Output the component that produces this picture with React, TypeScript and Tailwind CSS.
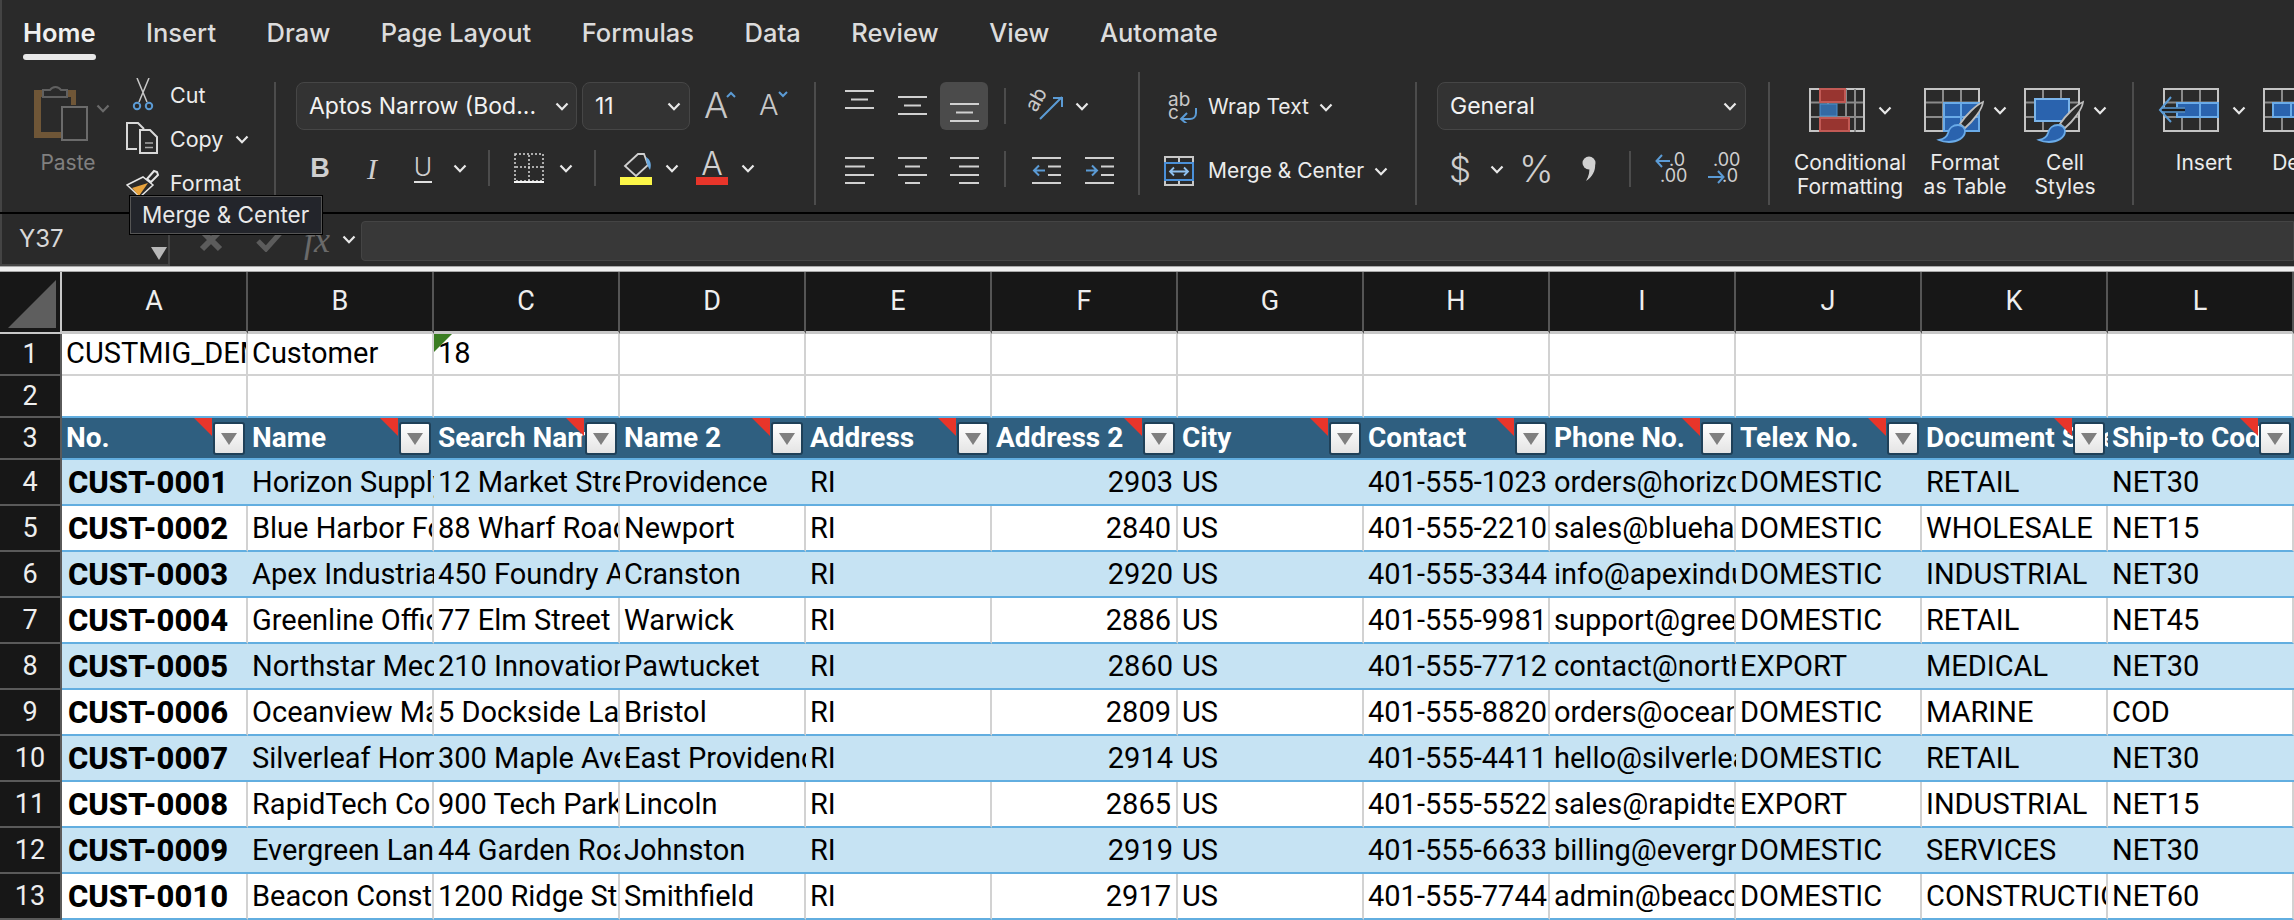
import type { ReactNode } from 'react'

const COLS = ['A', 'B', 'C', 'D', 'E', 'F', 'G', 'H', 'I', 'J', 'K', 'L']
const HEADS = ['No.', 'Name', 'Search Name', 'Name 2', 'Address', 'Address 2', 'City', 'Contact', 'Phone No.', 'Telex No.', 'Document Sales', 'Ship-to Code']

const ROWS = [
  ['CUST-0001', 'Horizon Supply Co', '12 Market Street', 'Providence', 'RI', '2903', 'US', '401-555-1023', 'orders@horizon.com', 'DOMESTIC', 'RETAIL', 'NET30'],
  ['CUST-0002', 'Blue Harbor Foods', '88 Wharf Road', 'Newport', 'RI', '2840', 'US', '401-555-2210', 'sales@blueharbor.com', 'DOMESTIC', 'WHOLESALE', 'NET15'],
  ['CUST-0003', 'Apex Industrial', '450 Foundry Ave', 'Cranston', 'RI', '2920', 'US', '401-555-3344', 'info@apexindustrial.com', 'DOMESTIC', 'INDUSTRIAL', 'NET30'],
  ['CUST-0004', 'Greenline Office', '77 Elm Street', 'Warwick', 'RI', '2886', 'US', '401-555-9981', 'support@greenline.com', 'DOMESTIC', 'RETAIL', 'NET45'],
  ['CUST-0005', 'Northstar Medical', '210 Innovation Way', 'Pawtucket', 'RI', '2860', 'US', '401-555-7712', 'contact@northstar.com', 'EXPORT', 'MEDICAL', 'NET30'],
  ['CUST-0006', 'Oceanview Marine', '5 Dockside Lane', 'Bristol', 'RI', '2809', 'US', '401-555-8820', 'orders@oceanview.com', 'DOMESTIC', 'MARINE', 'COD'],
  ['CUST-0007', 'Silverleaf Home', '300 Maple Ave', 'East Providence', 'RI', '2914', 'US', '401-555-4411', 'hello@silverleaf.com', 'DOMESTIC', 'RETAIL', 'NET30'],
  ['CUST-0008', 'RapidTech Corp', '900 Tech Park', 'Lincoln', 'RI', '2865', 'US', '401-555-5522', 'sales@rapidtech.com', 'EXPORT', 'INDUSTRIAL', 'NET15'],
  ['CUST-0009', 'Evergreen Landscaping', '44 Garden Road', 'Johnston', 'RI', '2919', 'US', '401-555-6633', 'billing@evergreen.com', 'DOMESTIC', 'SERVICES', 'NET30'],
  ['CUST-0010', 'Beacon Construction', '1200 Ridge Street', 'Smithfield', 'RI', '2917', 'US', '401-555-7744', 'admin@beacon.com', 'DOMESTIC', 'CONSTRUCTION', 'NET60'],
]

const TABS = ['Home', 'Insert', 'Draw', 'Page Layout', 'Formulas', 'Data', 'Review', 'View', 'Automate']

function Chev({ className = '', dim = false }: { className?: string; dim?: boolean }) {
  return (
    <svg width="14" height="9" viewBox="0 0 14 9" className={'shrink-0 ' + className}>
      <path d="M1.5 1.5 7 7.2l5.5-5.7" fill="none" stroke={dim ? '#6a6a6a' : '#e8e8e8'} strokeWidth="2.2" />
    </svg>
  )
}

function VLine({ className = '' }: { className?: string }) {
  return <div className={'w-[2px] h-9 bg-[#4c4c4c] shrink-0 ' + className} />
}

function GroupLine({ className = '' }: { className?: string }) {
  return <div className={'w-[2px] h-[123px] bg-[#4c4c4c] shrink-0 ' + className} />
}

function Lines({ lines, h, blue }: { lines: [number, number, number][]; h: number; blue?: ReactNode }) {
  return (
    <svg width="29" height={h} viewBox={`0 0 29 ${h}`} className="shrink-0">
      {lines.map(([a, b, y], i) => (
        <path key={i} d={`M${a} ${y}H${b}`} stroke="#d0d0d0" strokeWidth="2" />
      ))}
      {blue}
    </svg>
  )
}

const TOP3: [number, number, number][] = [[0, 29, 1], [6, 23, 9.5], [0, 29, 18]]
const L4: [number, number, number][] = [[0, 29, 1], [0, 20, 9.5], [0, 29, 18], [0, 20, 26]]
const C4: [number, number, number][] = [[0, 29, 1], [7, 22, 9.5], [0, 29, 18], [7, 22, 26]]
const R4: [number, number, number][] = [[0, 29, 1], [9, 29, 9.5], [0, 29, 18], [9, 29, 26]]
const IND: [number, number, number][] = [[0, 29, 1], [16, 29, 9.5], [16, 29, 18], [0, 29, 26]]

function Paste() {
  return (
    <svg width="56" height="60" viewBox="34 82 56 60" className="shrink-0">
      <path d="M34 90h9v7h-2v35h20v6H34zM67 90h9v15h-5v-8h-4z" fill="#6f5637" />
      <path d="M43 97v-7h7a6.500 6.500 0 0 1 11 0h6v7z" fill="#2a2a2a" stroke="#606060" strokeWidth="2" />
      <rect x="62" y="107" width="25" height="33" fill="none" stroke="#6b6b6b" strokeWidth="2" />
    </svg>
  )
}

function Scissors() {
  return (
    <svg width="24" height="34" viewBox="130 78 24 34">
      <path d="M136 78l10 24M148 78l-10 24" stroke="#c8c8c8" strokeWidth="1.500" fill="none" />
      <circle cx="136" cy="106" r="3.200" fill="none" stroke="#5b9bd5" strokeWidth="2" />
      <circle cx="148" cy="106" r="3.200" fill="none" stroke="#5b9bd5" strokeWidth="2" />
    </svg>
  )
}

function Copy() {
  return (
    <svg width="34" height="34" viewBox="126 122 34 34">
      <path d="M137 149h-10v-26h11l6 6" fill="none" stroke="#d8d8d8" strokeWidth="2" />
      <path d="M140 130h10l7 7v16h-17z" fill="#2a2a2a" stroke="#d8d8d8" strokeWidth="2" />
      <path d="M145 143h8M145 147.500h8" stroke="#a8a8a8" strokeWidth="1.500" />
    </svg>
  )
}

function Painter() {
  return (
    <svg width="34" height="34" viewBox="126 164 34 34">
      <path d="M127 183l16-8 10 8-13 12z" fill="#2a2a2a" stroke="#e6e6e6" strokeWidth="1.500" />
      <path d="M132 186l16-5-9 13z" fill="#e8a33d" />
      <path d="M147 177l7-8 3 1 1 3-7 7z" fill="#2a2a2a" stroke="#e6e6e6" strokeWidth="2" />
    </svg>
  )
}

function Grid({ x }: { x: number }) {
  return (
    <g fill="none" stroke="#b8b8b8" strokeWidth="2">
      <path d={`M${x + 19} 89v43M${x + 37} 89v43M${x} 102.500h56M${x} 117h56`} stroke="#8a8a8a" />
      <rect x={x + 1} y="89" width="54" height="42" stroke="#c4c4c4" />
    </g>
  )
}

function Brush({ dx }: { dx: number }) {
  return (
    <g transform={`translate(${dx} 0)`}>
      <path d="M1983 102c-1 8-10 19-18 26l-5-4c6-9 16-19 23-22z" fill="#2a2a2a" stroke="#bdbdbd" strokeWidth="1.800" />
      <path d="M1958 125c4 0 7 3 7 6 0 7-8 11-16 11-4 0-8-1-10-2 5-1 8-3 9-7 1-5 5-8 10-8z" fill="#2a63ae" stroke="#6aabe8" strokeWidth="1.800" />
    </g>
  )
}

function CondIcon() {
  return (
    <svg width="56" height="44" viewBox="1809 88 56 44" className="shrink-0">
      <Grid x={1809} />
      <path d="M1846 89v43M1855 89v43" stroke="#8a8a8a" strokeWidth="2" />
      <rect x="1820" y="89" width="25" height="13" fill="#983530" stroke="#c25a55" strokeWidth="2" />
      <rect x="1820" y="104" width="17" height="12" fill="#346aa3" stroke="#4f8fc9" strokeWidth="1" />
      <rect x="1820" y="118" width="29" height="13" fill="#983530" stroke="#c25a55" strokeWidth="2" />
    </svg>
  )
}

function TableIcon() {
  return (
    <svg width="62" height="56" viewBox="1924 88 62 56" className="shrink-0 -mr-[6px] self-start">
      <Grid x={1924} />
      <rect x="1944" y="103" width="35" height="28" fill="#2a63ae" stroke="#6aabe8" strokeWidth="2" />
      <path d="M1961 103v28M1944 117h35" stroke="#6aabe8" strokeWidth="2" />
      <Brush dx={0} />
    </svg>
  )
}

function StylesIcon() {
  return (
    <svg width="62" height="56" viewBox="2024 88 62 56" className="shrink-0 -mr-[6px] self-start">
      <Grid x={2024} />
      <rect x="2035" y="99" width="34" height="22" fill="#2a63ae" stroke="#7ab4ea" strokeWidth="2" />
      <Brush dx={100} />
    </svg>
  )
}

function InsertIcon() {
  return (
    <svg width="66" height="44" viewBox="2156 88 66 44" className="shrink-0 -ml-[6px] -mr-[4px]">
      <Grid x={2162} />
      <rect x="2176" y="103" width="41" height="14" fill="#2a63ae" stroke="#6aabe8" strokeWidth="2" />
      <path d="M2199 103v14" stroke="#6aabe8" strokeWidth="2" />
      <path d="M2184 110h-24" stroke="#1d1d1d" strokeWidth="5" />
      <path d="M2184 108h-24M2184 112h-24" stroke="#5b9bd5" strokeWidth="1.500" />
      <path d="M2170 97l-11 13 11 12" fill="none" stroke="#5b9bd5" strokeWidth="2" />
    </svg>
  )
}

function DeleteIcon() {
  return (
    <svg width="56" height="44" viewBox="2262 88 56 44" className="shrink-0">
      <Grid x={2262} />
      <rect x="2272" y="103" width="36" height="14" fill="#2a63ae" stroke="#6aabe8" strokeWidth="2" />
      <path d="M2290 103v14" stroke="#6aabe8" strokeWidth="2" />
    </svg>
  )
}

function BigButton({ icon, label, chev = true, className = '' }: { icon: ReactNode; label: ReactNode; chev?: boolean; className?: string }) {
  return (
    <div className={'w-[100px] shrink-0 flex flex-col items-center ' + className}>
      <div className="h-[44px] mt-4 flex items-center">
        {icon}
        {chev && <Chev className="ml-[13px]" />}
      </div>
      <div className="mt-[19px] text-[21px] leading-6 text-center whitespace-nowrap text-[#ececec]">{label}</div>
    </div>
  )
}

function Ribbon() {
  return (
    <div className="h-[212px] border-l-2 border-[#444444] bg-[#2a2a2a] font-['Inter',sans-serif] text-[#ececec] overflow-hidden">
      <div className="h-[72px] pt-[19px] pl-[21px] flex items-start gap-[50.5px]">
        {TABS.map((t, i) => (
          <div key={t} className="flex flex-col shrink-0">
            <div className={i === 0 ? 'text-[25.5px] leading-7 font-semibold text-[#f0f0f0]' : 'text-[25.5px] leading-7 font-medium text-[#dcdcdc]'}>{t}</div>
            {i === 0 && <div className="h-[6px] mt-[7px] rounded-full bg-[#e8e8e8]" />}
          </div>
        ))}
      </div>
      <div className="flex h-[140px]">
        {/* clipboard */}
        <div className="w-[272px] shrink-0 flex">
          <div className="ml-8 w-[92px] shrink-0">
            <div className="mt-[10px] flex items-center">
              <Paste />
              <Chev dim className="ml-[6px] -mt-2" />
            </div>
            <div className="mt-[9px] w-[68px] text-center text-[21px] leading-6 text-[#808080]">Paste</div>
          </div>
          <div className="flex flex-col pt-[1px]">
            <div className="h-[44px] flex items-center">
              <div className="w-[34px] flex justify-center"><Scissors /></div>
              <span className="ml-[10px] text-[21.5px]">Cut</span>
            </div>
            <div className="h-[44px] flex items-center">
              <div className="w-[34px] flex justify-center"><Copy /></div>
              <span className="ml-[10px] text-[21.5px]">Copy</span>
              <Chev className="ml-3" />
            </div>
            <div className="h-[44px] flex items-center">
              <div className="w-[34px] flex justify-center"><Painter /></div>
              <span className="ml-[10px] text-[21.5px]">Format</span>
            </div>
          </div>
        </div>
        <GroupLine className="mt-[10px]" />

        {/* font */}
        <div className="w-[538px] shrink-0 pt-[10px]">
          <div className="h-12 flex items-center">
            <div className="ml-5 w-[281px] h-12 shrink-0 flex items-center justify-between pl-3 pr-[7px] rounded-lg border border-[#464646] bg-[#333333] text-[23px] text-[#f2f2f2]">
              <span>Aptos Narrow (Bod...</span>
              <Chev />
            </div>
            <div className="ml-[5px] w-[108px] h-12 shrink-0 flex items-center justify-between pl-3 pr-2 rounded-lg border border-[#464646] bg-[#333333] text-[23px] text-[#f2f2f2]">
              <span>11</span>
              <Chev />
            </div>
            <div className="ml-[14px] w-[30px] flex items-start -mt-[2px]">
              <span className="text-[36px] leading-9 font-light text-[#c8c8c8]">A</span>
              <svg width="10" height="7" viewBox="0 0 10 7" className="shrink-0 mt-1 -ml-[2px]"><path d="M1 6l4-4 4 4" fill="none" stroke="#5b9bd5" strokeWidth="2" /></svg>
            </div>
            <div className="ml-[25px] w-7 flex items-start -mt-[2px]">
              <span className="text-[29px] leading-9 font-light text-[#c8c8c8]">A</span>
              <svg width="10" height="7" viewBox="0 0 10 7" className="shrink-0 mt-1 -ml-[1px]"><path d="M1 1l4 4 4-4" fill="none" stroke="#5b9bd5" strokeWidth="2" /></svg>
            </div>
          </div>
          <div className="h-12 mt-[14px] flex items-center">
            <span className="ml-[34px] w-5 text-center text-[27px] font-['Liberation_Sans',sans-serif] font-bold text-[#cfcfcf]">B</span>
            <span className="ml-8 w-5 text-center text-[30px] font-['Liberation_Serif',serif] italic text-[#cfcfcf]">I</span>
            <div className="ml-[31px] w-5 flex flex-col items-center">
              <span className="text-[25px] leading-[28px] font-light text-[#cfcfcf]">U</span>
              <div className="w-[18px] h-[2px] bg-[#e0e0e0]" />
            </div>
            <Chev className="ml-5" />
            <VLine className="ml-[21px]" />
            <svg width="30" height="30" viewBox="0 0 30 30" className="ml-6 shrink-0">
              <rect x="1" y="1" width="28" height="27" fill="none" stroke="#d8d8d8" strokeWidth="1.500" strokeDasharray="2 2" />
              <path d="M15 2v26M2 14h26" stroke="#d8d8d8" strokeWidth="1.500" strokeDasharray="2 2" />
              <path d="M0 29h30" stroke="#f4f4f4" strokeWidth="2" />
            </svg>
            <Chev className="ml-[15px]" />
            <VLine className="ml-[21px]" />
            <svg width="32" height="34" viewBox="620 152 32 34" className="ml-6 shrink-0">
              <path d="M625 167l13-12h6l4 11-12 11z" fill="none" stroke="#d0d0d0" strokeWidth="1.800" />
              <path d="M646 158c4 2 6 7 4 13-2-3-4-7-4-13z" fill="#6aa9e0" />
              <rect x="620" y="178" width="32" height="8" fill="#fbf648" />
            </svg>
            <Chev className="ml-[13px]" />
            <div className="ml-[17px] w-8 h-[34px] flex flex-col items-center">
              <span className="text-[32px] leading-[26px] font-light text-[#d0d0d0]">A</span>
              <div className="w-8 h-2 bg-[#e8352a]" />
            </div>
            <Chev className="ml-[13px]" />
          </div>
        </div>
        <GroupLine className="mt-[10px]" />

        {/* alignment */}
        <div className="w-[322px] shrink-0 pt-[10px]">
          <div className="h-12 flex items-center">
            <div className="ml-[29px] self-start mt-2"><Lines lines={TOP3} h={19} /></div>
            <div className="ml-6 self-start mt-[14px]"><Lines lines={TOP3} h={19} /></div>
            <div className="ml-[13px] w-12 h-12 shrink-0 rounded-md bg-[#4b4b4b] flex justify-center items-end pb-2">
              <Lines lines={TOP3} h={19} />
            </div>
            <VLine className="ml-4" />
            <svg width="33" height="32" viewBox="1030 90 33 32" className="ml-6 shrink-0 overflow-visible">
              <text x="1036" y="113" transform="rotate(-60 1036 113)" fontSize="20" fill="#c8c8c8" fontFamily="Inter, sans-serif">ab</text>
              <path d="M1040 119l22-22M1053 98h9v9" fill="none" stroke="#5b9bd5" strokeWidth="2" />
            </svg>
            <Chev className="ml-3" />
          </div>
          <div className="h-12 mt-4 flex items-center">
            <div className="ml-[29px]"><Lines lines={L4} h={27} /></div>
            <div className="ml-6"><Lines lines={C4} h={27} /></div>
            <div className="ml-[23px]"><Lines lines={R4} h={27} /></div>
            <VLine className="ml-[25px] -mt-[2px]" />
            <div className="ml-[26px]">
              <Lines lines={IND} h={27} blue={<path d="M13 13.500H2M7 8.500l-5 5 5 5" fill="none" stroke="#5b9bd5" strokeWidth="2" />} />
            </div>
            <div className="ml-6">
              <Lines lines={IND} h={27} blue={<path d="M1 13.500h11M7 8.500l5 5-5 5" fill="none" stroke="#5b9bd5" strokeWidth="2" />} />
            </div>
          </div>
        </div>
        <GroupLine />

        {/* wrap and merge */}
        <div className="w-[275px] shrink-0 pt-[11px] text-[21px]">
          <div className="h-12 flex items-center">
            <svg width="30" height="32" viewBox="1168 92 30 32" className="ml-7 shrink-0">
              <text x="1168" y="107" fontSize="19" fill="#c8c8c8" fontFamily="Inter, sans-serif">ab</text>
              <text x="1168" y="120" fontSize="19" fill="#c8c8c8" fontFamily="Inter, sans-serif">c</text>
              <path d="M1196 109v5c0 4-3 6-6 6h-8M1187 114l-6 6 6 5" fill="none" stroke="#5b9bd5" strokeWidth="2" />
            </svg>
            <span className="ml-[10px]">Wrap Text</span>
            <Chev className="ml-[10px]" />
          </div>
          <div className="h-12 mt-4 flex items-center">
            <svg width="30" height="30" viewBox="0 0 30 30" className="ml-6 shrink-0">
              <rect x="1" y="1" width="28" height="28" fill="none" stroke="#c8c8c8" strokeWidth="2" />
              <path d="M15 1v5M15 24v5" stroke="#c8c8c8" strokeWidth="2" />
              <rect x="1" y="7" width="28" height="17" fill="#2a2a2a" stroke="#4a90d9" strokeWidth="2" />
              <path d="M6 15.500h18M10 11.500l-4 4 4 4M20 11.500l4 4-4 4" fill="none" stroke="#8fc0ee" strokeWidth="1.800" />
            </svg>
            <span className="ml-[14px]">Merge &amp; Center</span>
            <Chev className="ml-[10px]" />
          </div>
        </div>
        <GroupLine className="mt-[10px]" />

        {/* number */}
        <div className="w-[351px] shrink-0 pt-[10px]">
          <div className="h-12 flex items-center">
            <div className="ml-5 w-[309px] h-12 shrink-0 flex items-center justify-between pl-3 pr-2 rounded-lg border border-[#464646] bg-[#333333] text-[23px] text-[#f2f2f2]">
              <span>General</span>
              <Chev />
            </div>
          </div>
          <div className="h-12 mt-[15px] flex items-center">
            <span className="ml-8 w-4 text-center text-[35px] font-light text-[#cfcfcf]">$</span>
            <Chev className="ml-[25px]" />
            <span className="ml-[15px] w-[30px] text-center text-[37px] font-light text-[#cfcfcf]">%</span>
            <svg width="14" height="26" viewBox="0 0 14 26" className="ml-[33px] shrink-0">
              <circle cx="7" cy="7" r="6.500" fill="#d0d0d0" />
              <path d="M13 7c1 8-3 14-9 18 3-5 4-10 3-15z" fill="#d0d0d0" />
            </svg>
            <VLine className="ml-[33px]" />
            <svg width="32" height="32" viewBox="0 0 32 32" className="ml-6 shrink-0 overflow-visible">
              <text x="14" y="13" fontSize="18" fill="#cfcfcf" fontFamily="Inter, sans-serif">.0</text>
              <text x="5" y="29" fontSize="18" fill="#cfcfcf" fontFamily="Inter, sans-serif">.00</text>
              <path d="M15 8H2M7 2L1.500 8 7 14" fill="none" stroke="#5b9bd5" strokeWidth="2" />
            </svg>
            <svg width="32" height="32" viewBox="0 0 32 32" className="ml-5 shrink-0 overflow-visible">
              <text x="6" y="13" fontSize="18" fill="#cfcfcf" fontFamily="Inter, sans-serif">.00</text>
              <text x="15" y="29" fontSize="18" fill="#cfcfcf" fontFamily="Inter, sans-serif">.0</text>
              <path d="M1 24h15M11 18l5.500 6-5.500 6" fill="none" stroke="#5b9bd5" strokeWidth="2" />
            </svg>
          </div>
        </div>
        <GroupLine className="mt-[10px]" />

        {/* styles */}
        <div className="w-[362px] shrink-0 flex">
          <BigButton className="ml-[30px]" icon={<CondIcon />} label={<>Conditional<br />Formatting</>} />
          <BigButton className="ml-[15px]" icon={<TableIcon />} label={<>Format<br />as Table</>} />
          <BigButton icon={<StylesIcon />} label={<>Cell<br />Styles</>} />
        </div>
        <GroupLine className="mt-[10px]" />

        {/* cells */}
        <div className="flex shrink-0">
          <BigButton className="ml-5" icon={<InsertIcon />} label="Insert" />
          <BigButton icon={<DeleteIcon />} label="Delete" />
        </div>
      </div>
    </div>
  )
}

function FormulaBar() {
  return (
    <div className="h-[54px] border-t-2 border-black bg-[#2a2a2a] flex font-['Inter',sans-serif]">
      <div className="w-[170px] h-[52px] shrink-0 border-l-2 border-r-2 border-b-2 border-[#444444] flex items-center justify-between pl-[17px] pr-[1px] text-[#d8d8d8] text-[24px]">
        <span>Y37</span>
        <svg width="16" height="13" viewBox="0 0 16 13" className="mt-7 shrink-0"><path d="M0 0h16L8 13z" fill="#b8b8b8" /></svg>
      </div>
      <svg width="24" height="24" viewBox="0 0 24 24" className="ml-[29px] mt-[14px] shrink-0"><path d="M3 3l18 18M21 3L3 21" stroke="#5c5c5c" strokeWidth="6" /></svg>
      <svg width="28" height="24" viewBox="0 0 28 24" className="ml-[33px] mt-[14px] shrink-0"><path d="M2 13l8 8L26 3" fill="none" stroke="#5c5c5c" strokeWidth="5" /></svg>
      <span className="ml-5 mt-2 text-[36px] leading-9 italic font-['Liberation_Serif',serif] text-[#6a6a6a]">fx</span>
      <Chev className="ml-3 mt-[21px]" />
      <div className="ml-[5px] mt-[7px] flex-1 h-10 rounded-l border border-[#444444] bg-[#383838]" />
    </div>
  )
}

function FilterButton() {
  return (
    <div className="absolute right-[3px] top-1 w-8 h-[33px] rounded-[3px] border-2 border-[#1f4058] bg-gradient-to-b from-white to-[#e4e4e4] flex items-center justify-center">
      <svg width="16" height="13" viewBox="0 0 16 13"><path d="M0 1h16L8 13z" fill="#7f7f7f" /></svg>
    </div>
  )
}

function Sheet() {
  return (
    <div className="grid grid-cols-[62px_repeat(12,186px)] grid-rows-[62px_42px_42px_42px_repeat(10,46px)] font-['Roboto',sans-serif] text-[29px] text-black">
      <div className="bg-[#171717] border-r-2 border-b-2 border-[#c8c8c8] flex items-end justify-end pr-[4px] pb-1">
        <svg width="48" height="48" viewBox="0 0 48 48"><path d="M48 0v48H0z" fill="#5e5e5e" /></svg>
      </div>
      {COLS.map(c => (
        <div key={c} className="bg-[#171717] border-r-2 border-r-[#555555] border-b-[3px] border-b-[#c8c8c8] flex items-center justify-center text-[27px] text-[#eeeeee]">{c}</div>
      ))}

      <div className="bg-[#171717] border-b-2 border-r-2 border-[#5a5a5a] flex items-center justify-center text-[27px] text-[#eeeeee]">1</div>
      {COLS.map((c, i) => (
        <div key={c} className="relative bg-white border-r-2 border-b-2 border-[#d2d2d2] pl-1 flex items-center overflow-hidden whitespace-nowrap">
          {i === 0 && 'CUSTMIG_DEMO'}
          {i === 1 && 'Customer'}
          {i === 2 && (
            <>
              <svg width="18" height="18" viewBox="0 0 18 18" className="absolute left-0 top-0"><path d="M0 0h18L0 18z" fill="#3a7d22" /></svg>
              18
            </>
          )}
        </div>
      ))}

      <div className="bg-[#171717] border-b-2 border-r-2 border-[#5a5a5a] flex items-center justify-center text-[27px] text-[#eeeeee]">2</div>
      {COLS.map(c => (
        <div key={c} className="bg-white border-r-2 border-r-[#d2d2d2] border-b-2 border-b-[#62aee0]" />
      ))}

      <div className="bg-[#171717] border-b-2 border-r-2 border-[#5a5a5a] flex items-center justify-center text-[27px] text-[#eeeeee]">3</div>
      {HEADS.map(h => (
        <div key={h} className="relative bg-[#2f5f80] border-b-2 border-[#62aee0] pl-1 flex items-center overflow-hidden whitespace-nowrap font-bold text-[28px] text-white">
          {h}
          <svg width="18" height="18" viewBox="0 0 18 18" className="absolute right-9 top-0"><path d="M0 0h18v18z" fill="#e8352a" /></svg>
          <FilterButton />
        </div>
      ))}

      {ROWS.map((row, r) => (
        <div key={row[0]} className="contents">
          <div className="bg-[#171717] border-b-2 border-r-2 border-[#5a5a5a] flex items-center justify-center text-[27px] text-[#eeeeee]">{r + 4}</div>
          {row.map((v, i) => (
            <div
              key={i}
              className={
                (r % 2 === 0 ? 'bg-[#c6e3f3] ' : 'bg-white border-r-2 border-r-[#d2d2d2] ') +
                'border-b-2 border-b-[#62aee0] pt-[2px] flex items-center overflow-hidden whitespace-nowrap ' +
                (i === 5 ? 'justify-end pr-[5px] ' : 'pl-1 ') +
                (i === 0 ? 'pl-[6px] font-extrabold text-[31px]' : '')
              }
            >
              {v}
            </div>
          ))}
        </div>
      ))}
    </div>
  )
}

export default function App() {
  return (
    <div className="relative w-[2294px] h-[920px] overflow-hidden bg-[#2a2a2a]">
      <Ribbon />
      <FormulaBar />
      <div className="h-[6px] border-y border-[#a8a8a8] bg-[#f0f0f0]" />
      <Sheet />
      <div className="absolute left-[130px] top-[196px] w-[192px] h-[38px] border border-[#555555] outline outline-1 outline-black bg-[#23252b] pl-[11px] flex items-center font-['Inter',sans-serif] text-[22.5px] text-[#e8e8e8]">
        Merge &amp; Center
      </div>
    </div>
  )
}
